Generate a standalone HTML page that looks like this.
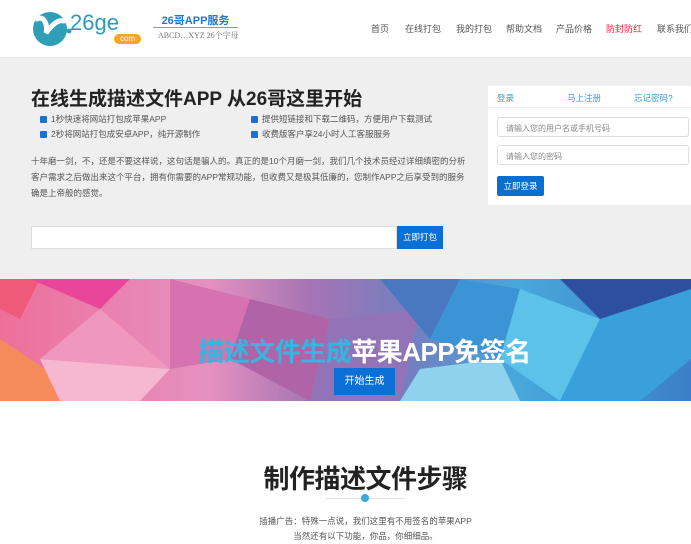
<!DOCTYPE html>
<html><head><meta charset="utf-8"><style>
*{margin:0;padding:0;box-sizing:border-box}
body{width:691px;height:538px;overflow:hidden;background:#fff;font-family:"Liberation Sans","Noto Sans CJK SC",sans-serif;position:relative}
.a{position:absolute;white-space:nowrap}
.nav span{position:absolute;top:22px;font-size:9px;color:#555;white-space:nowrap}
.cb{position:absolute;font-size:8.5px;color:#555}
.cb i{display:inline-block;width:7px;height:7px;background:#1e6fcf;border-radius:1px;margin-right:4px;vertical-align:-1px}
</style></head><body>
<svg class="a" style="left:32px;top:11px" width="40" height="36" viewBox="0 0 40 36">
<circle cx="18" cy="18" r="17" fill="#2f9fb8"/>
<path d="M5 8 C12 4 16 14 14 22 C20 14 26 8 32 10" stroke="#fff" stroke-width="5" fill="none" stroke-linecap="round"/>
<circle cx="37" cy="20" r="2.5" fill="#2f9fb8"/>
</svg>
<div class="a" style="left:70px;top:10px;font-size:22px;color:#2d9bb6">26ge</div>
<div class="a" style="left:114px;top:34px;width:27px;height:10px;border-radius:5px;background:#f5a623;color:#fff;font-size:8px;text-align:center;line-height:10px">com</div>
<div class="a" style="left:153px;top:12px;width:85px;text-align:center;font-size:11px;font-weight:bold;color:#1e78d2">26哥APP服务</div>
<div class="a" style="left:153px;top:27px;width:85px;height:1px;background:#999"></div>
<div class="a" style="left:158px;top:30px;font-size:8px;color:#777;font-family:'Liberation Serif','Noto Serif CJK SC',serif">ABCD…XYZ 26个字母</div>
<div class="nav">
<span style="left:371px">首页</span><span style="left:405px">在线打包</span><span style="left:456px">我的打包</span><span style="left:506px">帮助文档</span><span style="left:556px">产品价格</span><span style="left:606px;color:#f0203a">防封防红</span><span style="left:657px">联系我们</span>
</div>
<div class="a" style="left:0;top:57px;width:691px;height:222px;background:#efefef;border-top:1px solid #e4e4e4"></div>
<div class="a" style="left:31px;top:84px;font-size:19px;font-weight:bold;color:#222">在线生成描述文件APP 从26哥这里开始</div>
<div class="cb" style="left:40px;top:113px"><i></i>1秒快速将网站打包成苹果APP</div>
<div class="cb" style="left:40px;top:128px"><i></i>2秒将网站打包成安卓APP，纯开源制作</div>
<div class="cb" style="left:251px;top:113px"><i></i>提供短链接和下载二维码，方便用户下载测试</div>
<div class="cb" style="left:251px;top:128px"><i></i>收费版客户享24小时人工客服服务</div>
<div class="a" style="left:31px;top:153px;width:440px;white-space:normal;font-size:8.5px;line-height:16px;color:#555">十年磨一剑，不，还是不要这样说，这句话是骗人的。真正的是10个月磨一剑，我们几个技术员经过详细缜密的分析客户需求之后做出来这个平台，拥有你需要的APP常规功能，但收费又是极其低廉的，您制作APP之后享受到的服务确是上帝般的感觉。</div>
<div class="a" style="left:488px;top:86px;width:203px;height:119px;background:#fff;border-radius:2px"></div>
<div class="a" style="left:488px;top:107px;width:203px;height:1px;background:#eee"></div>
<div class="a" style="left:497px;top:92px;font-size:8.5px;color:#3a9ad9">登录</div>
<div class="a" style="left:567px;top:92px;font-size:8.5px;color:#3a9ad9">马上注册</div>
<div class="a" style="left:634px;top:92px;font-size:8.5px;color:#3a9ad9">忘记密码?</div>
<div class="a" style="left:497px;top:117px;width:192px;height:20px;border:1px solid #ddd;border-radius:3px;font-size:8px;color:#888;padding:5px 8px">请输入您的用户名或手机号码</div>
<div class="a" style="left:497px;top:145px;width:192px;height:20px;border:1px solid #ddd;border-radius:3px;font-size:8px;color:#888;padding:5px 8px">请输入您的密码</div>
<div class="a" style="left:497px;top:176px;width:47px;height:20px;background:#0b6fcf;border-radius:2px;color:#fff;font-size:8.5px;text-align:center;line-height:20px">立即登录</div>
<div class="a" style="left:31px;top:226px;width:366px;height:23px;background:#fff;border:1px solid #ddd"></div>
<div class="a" style="left:397px;top:226px;width:46px;height:23px;background:#0b6fd6;color:#fff;font-size:8.5px;text-align:center;line-height:23px">立即打包</div>
<svg class="a" style="left:0;top:279px" width="691" height="122" viewBox="0 0 691 122">
<defs><linearGradient id="g" x1="0" x2="1" y1="0" y2="0"><stop offset="0" stop-color="#ee6f9a"/><stop offset="0.3" stop-color="#e591c0"/><stop offset="0.45" stop-color="#a574b4"/><stop offset="0.6" stop-color="#7080c0"/><stop offset="0.75" stop-color="#48a8dc"/><stop offset="1" stop-color="#3c7fc8"/></linearGradient></defs>
<rect width="691" height="122" fill="url(#g)"/>
<polygon points="0,0 40,0 20,40 0,30" fill="#ef5a7a"/>
<polygon points="0,60 45,90 60,122 0,122" fill="#f58a5a"/>
<polygon points="30,0 130,0 100,30" fill="#e9469a"/>
<polygon points="40,80 170,90 140,122 60,122" fill="#f5b8d0"/>
<polygon points="100,30 170,90 40,80" fill="#f097bd"/>
<polygon points="170,0 250,20 230,80 170,90" fill="#d672ae"/>
<polygon points="250,20 330,40 310,122 230,80" fill="#b064a8"/>
<polygon points="330,40 420,30 400,122 310,122" fill="#9373b8"/>
<polygon points="380,0 460,0 430,60" fill="#4a78c0"/>
<polygon points="460,0 520,10 500,80 430,60" fill="#3a94d6"/>
<polygon points="520,10 600,40 560,122 500,80" fill="#5cc2ea"/>
<polygon points="600,40 691,10 691,80 640,122 560,122" fill="#3aa0dc"/>
<polygon points="560,0 691,0 691,10 600,40" fill="#2e4ea0"/>
<polygon points="420,90 500,80 520,122 400,122" fill="#8ed2ee"/>
</svg>
<div class="a" style="left:0;top:332px;width:729px;text-align:center;font-size:26px;font-weight:bold;color:#fff;letter-spacing:-0.5px"><span style="color:#38b4de">描述文件生成</span>苹果APP免签名</div>
<div class="a" style="left:334px;top:368px;width:61px;height:27px;background:#0b6fd6;color:#fff;font-size:10px;text-align:center;line-height:27px">开始生成</div>
<div class="a" style="left:0;top:459px;width:731px;text-align:center;font-size:26px;font-weight:bold;color:#222;letter-spacing:-0.5px">制作描述文件步骤</div>
<div class="a" style="left:325px;top:498px;width:80px;height:1px;background:#e3e3e3"></div>
<div class="a" style="left:361px;top:494px;width:8px;height:8px;border-radius:50%;background:#3aa8e0"></div>
<div class="a" style="left:0;top:514px;width:731px;text-align:center;font-size:8.5px;line-height:15px;color:#555">插播广告：特殊一点说，我们这里有不用签名的苹果APP<br>当然还有以下功能，你品，你细细品。</div>
</body></html>
